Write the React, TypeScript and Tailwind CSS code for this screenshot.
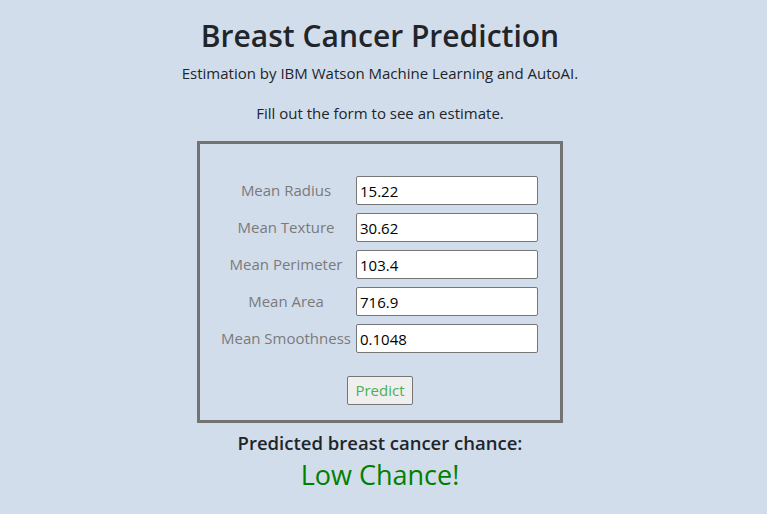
import { useState } from 'react'

// 입력 필드 목록
const fields = [
    { label: 'Mean Radius', value: '15.22' },
    { label: 'Mean Texture', value: '30.62' },
    { label: 'Mean Perimeter', value: '103.4' },
    { label: 'Mean Area', value: '716.9' },
    { label: 'Mean Smoothness', value: '0.1048' },
]

export default function App() {
    const [values, setValues] = useState(fields.map((f) => f.value))

    return (
        <div
            className="min-h-[514px] bg-[#d2ddec] text-[#212529] text-center pr-[7px]"
            style={{ fontFamily: '"Open Sans", "Noto Sans", sans-serif' }}
        >
            <h1 className="pt-[14px] text-[30px] font-semibold leading-[44px]">Breast Cancer Prediction</h1>
            <p className="mt-[3px] text-[15px] leading-6">Estimation by IBM Watson Machine Learning and AutoAI.</p>
            <p className="mt-[16px] text-[15px] leading-6">Fill out the form to see an estimate.</p>

            {/* 입력 폼 */}
            <div className="mx-auto mt-[16px] w-[366px] h-[282px] border-[3px] border-[#737373] pt-[32px] pl-[16px]">
                <div className="flex flex-col gap-[8px]">
                    {fields.map((f, i) => (
                        <div key={f.label} className="flex items-center">
                            <div className="w-[140px] text-[15px] text-[#7a7a7a] text-center">{f.label}</div>
                            <input
                                className="w-[182px] h-[29px] bg-white border border-[#767676] rounded-[2px] px-[3px] text-[15px] text-black outline-none"
                                value={values[i]}
                                onChange={(e) => {
                                    const next = [...values]
                                    next[i] = e.target.value
                                    setValues(next)
                                }}
                            />
                        </div>
                    ))}
                </div>
                <div className="mt-[23px] pr-[16px]">
                    <button className="h-[29px] px-[7px] bg-[#efefef] border border-[#767676] rounded-[2px] text-[15px] text-[#4caf50]">
                        Predict
                    </button>
                </div>
            </div>

            <div className="mt-[6px] text-[18.5px] font-semibold leading-7">Predicted breast cancer chance:</div>
            <div className="mt-0 text-[27px] font-medium leading-9 text-[#008000]">Low Chance!</div>
        </div>
    )
}
